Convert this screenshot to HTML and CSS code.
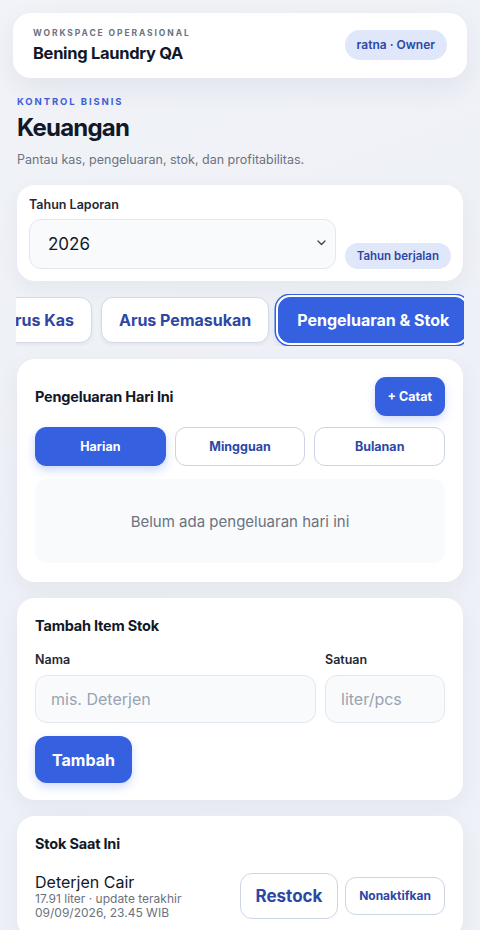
FILE: index.html
```html
<!DOCTYPE html>
<html lang="id">
<head>
<meta charset="utf-8">
<title>Keuangan</title>
<link rel="stylesheet" href="styles.css">
</head>
<body>
<header class="topbar">
  <div class="topbar-info">
    <div class="eyebrow">WORKSPACE OPERASIONAL</div>
    <div class="workspace-name">Bening Laundry QA</div>
  </div>
  <span class="role-pill">ratna · Owner</span>
</header>
<main class="page">
  <section class="page-head">
    <div class="kicker">KONTROL BISNIS</div>
    <h1 class="title">Keuangan</h1>
    <p class="subtitle">Pantau kas, pengeluaran, stok, dan profitabilitas.</p>
  </section>

  <section class="card year-card">
    <div class="year-field">
      <label class="field-label">Tahun Laporan</label>
      <div class="select">
        <span>2026</span>
        <svg class="chev" width="9" height="6" viewBox="0 0 9 6"><path d="M1 1l3.5 3.5L8 1" fill="none" stroke="#374151" stroke-width="1.3" stroke-linecap="round" stroke-linejoin="round"/></svg>
      </div>
    </div>
    <span class="year-pill">Tahun berjalan</span>
  </section>

  <nav class="tabs">
    <div class="tabs-track">
      <span class="tab">Arus Kas</span>
      <span class="tab">Arus Pemasukan</span>
      <span class="tab tab-active">Pengeluaran &amp; Stok</span>
    </div>
  </nav>

  <section class="card">
    <div class="card-head">
      <h2 class="card-title">Pengeluaran Hari Ini</h2>
      <button class="btn-primary btn-sm">+ Catat</button>
    </div>
    <div class="segments">
      <button class="seg seg-active">Harian</button>
      <button class="seg">Mingguan</button>
      <button class="seg">Bulanan</button>
    </div>
    <div class="empty">Belum ada pengeluaran hari ini</div>
  </section>

  <section class="card card-form">
    <h2 class="card-title">Tambah Item Stok</h2>
    <div class="form-row">
      <div class="field field-grow">
        <label class="field-label">Nama</label>
        <div class="input placeholder">mis. Deterjen</div>
      </div>
      <div class="field field-unit">
        <label class="field-label">Satuan</label>
        <div class="input placeholder">liter/pcs</div>
      </div>
    </div>
    <button class="btn-primary btn-lg">Tambah</button>
  </section>

  <section class="card">
    <h2 class="card-title">Stok Saat Ini</h2>
    <div class="stock-row">
      <div class="stock-info">
        <div class="stock-name">Deterjen Cair</div>
        <div class="stock-meta">17.91 liter · update terakhir<br>09/09/2026, 23.45 WIB</div>
      </div>
      <button class="btn-outline btn-restock">Restock</button>
      <button class="btn-outline btn-off">Nonaktifkan</button>
    </div>
  </section>
</main>
</body>
</html>
```
FILE: styles.css
```css
* { box-sizing: border-box; }
html, body { margin: 0; padding: 0; }
body {
  font-family: Inter, "Noto Sans", "Liberation Sans", sans-serif;
  color: #111827;
  background: linear-gradient(160deg, #f1f3f8 0%, #edf0f6 50%, #eef1f6 100%);
  min-height: 930px;
  overflow: hidden;
}
button { font-family: inherit; cursor: pointer; }

.topbar {
  margin: 13px 13px 0;
  height: 65px;
  background: #fff;
  border-radius: 18px;
  padding: 0 20px;
  display: flex;
  align-items: center;
  justify-content: space-between;
  box-shadow: 0 10px 30px rgba(30, 41, 80, 0.07);
}
.eyebrow {
  font-size: 8.5px;
  font-weight: 700;
  letter-spacing: 1.9px;
  color: #6b7280;
  line-height: 12px;
}
.workspace-name {
  font-size: 16.5px;
  font-weight: 700;
  letter-spacing: -0.3px;
  line-height: 22px;
  margin-top: 3px;
}
.role-pill {
  background: #e1e7fa;
  color: #2c48a6;
  font-size: 12px;
  font-weight: 600;
  border-radius: 15px;
  padding: 0 12px;
  height: 30px;
  line-height: 30px;
  margin-top: -1px;
}

.page { padding: 0 17px; }
.page-head { padding-top: 18px; }
.kicker {
  font-size: 9.5px;
  font-weight: 700;
  letter-spacing: 1.9px;
  color: #3d5fd6;
  line-height: 12px;
}
.title {
  margin: 4px 0 0;
  font-size: 24px;
  font-weight: 700;
  letter-spacing: -0.8px;
  line-height: 32px;
}
.subtitle {
  margin: 7px 0 0;
  font-size: 12.5px;
  color: #6b7280;
  line-height: 18px;
}

.card {
  background: #fff;
  border-radius: 18px;
  padding: 18px 18px 19px;
  box-shadow: 0 8px 24px rgba(30, 41, 80, 0.05);
  margin-bottom: 16px;
}

.year-card {
  margin-top: 16px;
  padding: 12px;
  display: flex;
  align-items: flex-end;
  gap: 9px;
}
.year-field { flex: 1; }
.field-label {
  display: block;
  font-size: 12.5px;
  font-weight: 600;
  color: #1f2937;
  line-height: 16px;
}
.year-field .field-label { margin-bottom: 6px; }
.select {
  height: 50px;
  border: 1px solid #e3e7ee;
  background: #f8fafc;
  border-radius: 12px;
  display: flex;
  align-items: center;
  justify-content: space-between;
  padding: 0 9px 0 18px;
  font-size: 17px;
  color: #111827;
}
.chev { margin-top: -3px; }
.year-pill {
  background: #e1e7fa;
  color: #2c48a6;
  font-size: 11.5px;
  font-weight: 600;
  height: 26px;
  line-height: 26px;
  padding: 0 12px;
  border-radius: 13px;
}

.tabs {
  overflow: hidden;
  margin: -3px -1px 13px -1px;
  padding: 3px 0 3px;
}
.tabs-track {
  display: flex;
  gap: 9px;
  margin-left: -31px;
  padding-right: 2px;
}
.tab {
  flex: none;
  height: 46px;
  display: flex;
  align-items: center;
  padding: 0 17px;
  border: 1.5px solid #d3d9e8;
  border-radius: 12px;
  background: #fff;
  color: #2c48a6;
  font-size: 16px;
  font-weight: 700;
  box-shadow: 0 2px 4px rgba(30, 41, 80, 0.06);
  white-space: nowrap;
}
.tab-active {
  background: #3561e1;
  color: #fff;
  border-color: #3561e1;
  box-shadow: 0 0 0 2px #fff, 0 0 0 3.5px #3561e1, 0 4px 10px rgba(53, 97, 225, 0.25);
  padding: 0 17px 0 18px;
}

.card-head {
  display: flex;
  align-items: center;
  justify-content: space-between;
}
.card-title {
  margin: 0;
  font-size: 14.5px;
  font-weight: 700;
  letter-spacing: -0.2px;
  line-height: 20px;
}
.btn-primary {
  background: #3561e1;
  color: #fff;
  border: none;
  font-weight: 700;
  box-shadow: 0 4px 10px rgba(53, 97, 225, 0.22);
}
.btn-sm {
  height: 39px;
  padding: 0 13px;
  border-radius: 11px;
  font-size: 12.5px;
}
.segments {
  display: grid;
  grid-template-columns: 1fr 1fr 1fr;
  gap: 9px;
  margin-top: 11px;
}
.seg {
  height: 39px;
  border: 1.5px solid #ccd4e6;
  background: #fff;
  color: #2c48a6;
  font-size: 12.5px;
  font-weight: 700;
  border-radius: 11px;
}
.seg-active {
  background: #3561e1;
  border-color: #3561e1;
  color: #fff;
  box-shadow: 0 4px 10px rgba(53, 97, 225, 0.25);
}
.empty {
  margin-top: 13px;
  height: 84px;
  background: #f8fafc;
  border-radius: 12px;
  display: flex;
  align-items: center;
  justify-content: center;
  font-size: 15px;
  color: #6b7280;
}

.card-form { padding-bottom: 17px; }
.form-row {
  display: flex;
  gap: 9px;
  margin-top: 16px;
}
.field-grow { flex: 1; }
.field-unit { width: 120px; }
.field .field-label { margin-bottom: 7px; }
.input {
  height: 48px;
  border: 1px solid #e3e7ee;
  background: #f8fafc;
  border-radius: 12px;
  display: flex;
  align-items: center;
  padding: 0 15px;
  font-size: 16px;
}
.placeholder { color: #9aa3b2; }
.btn-lg {
  margin-top: 13px;
  height: 47px;
  padding: 0 17px;
  border-radius: 12px;
  font-size: 16px;
}

.stock-row {
  display: flex;
  align-items: center;
  gap: 7px;
  margin-top: 18px;
}
.stock-info { flex: 1; }
.stock-name {
  font-size: 16px;
  line-height: 20px;
  color: #111827;
}
.stock-meta {
  font-size: 12px;
  line-height: 13.5px;
  color: #6b7280;
}
.btn-outline {
  background: #fff;
  border: 1.5px solid #ccd4e6;
  color: #2c48a6;
  font-weight: 700;
}
.btn-restock {
  height: 46px;
  width: 98px;
  border-radius: 12px;
  font-size: 17px;
}
.btn-off {
  height: 38px;
  width: 100px;
  border-radius: 11px;
  font-size: 12px;
}
```
